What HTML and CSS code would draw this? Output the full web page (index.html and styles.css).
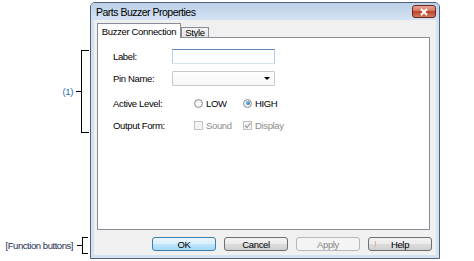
FILE: index.html
```html
<!DOCTYPE html>
<html lang="en">
<head>
    <meta charset="UTF-8">
    <title>Parts Buzzer Properties</title>
    <link rel="stylesheet" href="styles.css">
</head>
<body>
    <div class="page">
        <div class="callouts">
            <div class="callout callout-main">
                <span class="callout-text">(1)</span>
                <span class="callout-stem"></span>
                <span class="callout-bracket"></span>
            </div>
            <div class="callout callout-buttons">
                <span class="callout-text">[Function buttons]</span>
                <span class="callout-stem"></span>
                <span class="callout-bracket"></span>
            </div>
        </div>

        <div class="dialog">
            <div class="titlebar">
                <span class="title">Parts Buzzer Properties</span>
                <button class="close-btn">
                    <svg width="10" height="8" viewBox="0 0 10 8">
                        <path d="M2 1 L8 7 M8 1 L2 7" stroke="#fff" stroke-width="2" fill="none"/>
                    </svg>
                </button>
            </div>
            <div class="client">
                <div class="tabs">
                    <div class="tab active">Buzzer Connection</div>
                    <div class="tab">Style</div>
                </div>
                <div class="tab-panel">
                    <div class="row">
                        <span class="field-label">Label:</span>
                        <span class="textbox"></span>
                    </div>
                    <div class="row row-pin">
                        <span class="field-label">Pin Name:</span>
                        <span class="combo"><span class="combo-arrow"></span></span>
                    </div>
                    <div class="row row-level">
                        <span class="field-label">Active Level:</span>
                        <div class="choices">
                            <label class="choice"><span class="radio"></span>LOW</label>
                            <label class="choice"><span class="radio on"></span>HIGH</label>
                        </div>
                    </div>
                    <div class="row row-output">
                        <span class="field-label">Output Form:</span>
                        <div class="choices disabled">
                            <label class="choice"><span class="check"></span>Sound</label>
                            <label class="choice">
                                <span class="check">
                                    <svg width="7" height="7" viewBox="0 0 7 7">
                                        <path d="M1 3.5 L3 5.5 L6.5 1" stroke="#9a9a9a" stroke-width="1.2" fill="none"/>
                                    </svg>
                                </span>Display
                            </label>
                        </div>
                    </div>
                </div>
                <div class="buttons">
                    <button class="btn btn-default">OK</button>
                    <button class="btn">Cancel</button>
                    <button class="btn" disabled>Apply</button>
                    <button class="btn btn-help"><span class="focus-mark"></span>Help</button>
                </div>
            </div>
        </div>
    </div>
</body>
</html>
```

FILE: styles.css
```css
body {
    margin: 0;
    background-color: #fff;
    font-family: "Liberation Sans", Arial, sans-serif;
    font-size: 9.5px;
    letter-spacing: -0.35px;
    color: #000;
    white-space: nowrap;
}
.page {
    display: flex;
    height: 261px;
}

/* annotations on the left */
.callouts {
    position: relative;
    width: 90px;
    flex: none;
}
.callout {
    position: absolute;
    display: flex;
    align-items: center;
}
.callout-main {
    top: 50px;
    right: 1px;
}
.callout-buttons {
    top: 237px;
    right: 2px;
}
.callout-text {
    color: #2a68b8;
    margin-right: 3px;
}
.callout-buttons .callout-text {
    color: #1c2c58;
    margin-right: 4px;
    letter-spacing: -0.45px;
}
.callout-stem {
    width: 5px;
    height: 1px;
    background-color: #000;
}
.callout-bracket {
    box-sizing: border-box;
    border: 1px solid #000;
    border-right: none;
}
.callout-main .callout-bracket {
    width: 8px;
    height: 83px;
}
.callout-buttons .callout-bracket {
    width: 6px;
    height: 17px;
}

/* dialog window */
.dialog {
    margin-top: 2px;
    width: 350px;
    height: 257px;
    box-sizing: border-box;
    border: 1px solid #4f6277;
    border-radius: 5px 5px 0 0;
    background-color: #d3e1f1;
    padding: 0 3px 3px;
    display: flex;
    flex-direction: column;
}
.titlebar {
    height: 17px;
    flex: none;
    margin: 0 -3px;
    padding: 0 3px 0 5px;
    display: flex;
    align-items: center;
    justify-content: space-between;
    background: linear-gradient(#bcd0e8, #d4e2f3);
    border-radius: 4px 4px 0 0;
}
.title {
    font-size: 10.5px;
    letter-spacing: -0.5px;
    color: #000;
}
.close-btn {
    width: 24px;
    height: 13px;
    padding: 0;
    border: 1px solid #6b2a20;
    border-radius: 3px;
    background: linear-gradient(#e6a595, #d4705a 50%, #c2432c 50%, #d0785e);
    display: flex;
    align-items: center;
    justify-content: center;
}
.client {
    flex: 1;
    background-color: #f0f0f0;
    padding: 3px 6px 4px 3px;
    display: flex;
    flex-direction: column;
}

/* tabs */
.tabs {
    display: flex;
    align-items: flex-end;
    height: 14px;
    flex: none;
}
.tab {
    box-sizing: border-box;
    height: 10px;
    width: 28px;
    border: 1px solid #898c95;
    border-bottom: none;
    background: linear-gradient(#f2f2f2, #e3e3e3);
    display: flex;
    align-items: center;
    justify-content: center;
}
.tab.active {
    position: relative;
    width: 84px;
    height: 15px;
    margin-bottom: -1px;
    background: #fff;
}
.tab-panel {
    box-sizing: border-box;
    height: 193px;
    flex: none;
    border: 1px solid #898c95;
    background-color: #fff;
    padding: 11px 0 0 15px;
}

/* form rows */
.row {
    display: flex;
    align-items: center;
    height: 15px;
}
.row-pin {
    margin-top: 7px;
}
.row-level {
    margin-top: 10px;
    height: 14px;
}
.row-output {
    margin-top: 8px;
    height: 14px;
}
.field-label {
    width: 59px;
    flex: none;
}
.textbox {
    box-sizing: border-box;
    width: 103px;
    height: 15px;
    border: 1px solid;
    border-color: #5f86b4 #b6cde6 #d4e2f1 #b6cde6;
    background-color: #fff;
}
.combo {
    box-sizing: border-box;
    width: 103px;
    height: 15px;
    border: 1px solid #c9c9c9;
    border-radius: 1px;
    background: linear-gradient(#fff, #f6f6f6);
    display: flex;
    align-items: center;
    justify-content: flex-end;
    padding-right: 4px;
}
.combo-arrow {
    width: 0;
    height: 0;
    border-left: 3px solid transparent;
    border-right: 3px solid transparent;
    border-top: 3px solid #000;
}
.choices {
    display: flex;
    margin-left: 22px;
}
.choice {
    display: flex;
    align-items: center;
    width: 49px;
}
.choices.disabled {
    color: #8d8d8d;
}
.radio {
    box-sizing: border-box;
    width: 9px;
    height: 9px;
    margin-right: 3px;
    border: 1px solid #8f8f8f;
    border-radius: 50%;
    background: radial-gradient(#fff, #e2e2e2);
    display: flex;
    align-items: center;
    justify-content: center;
}
.radio.on::after {
    content: "";
    width: 4px;
    height: 4px;
    border-radius: 50%;
    background: radial-gradient(circle at 40% 40%, #6fc0f0, #1a5ea8);
}
.check {
    box-sizing: border-box;
    width: 9px;
    height: 9px;
    margin-right: 3px;
    border: 1px solid #c2c2c2;
    background-color: #f4f4f4;
    display: flex;
    align-items: center;
    justify-content: center;
}

/* function buttons */
.buttons {
    display: flex;
    justify-content: flex-end;
    gap: 8px;
    margin-top: 7px;
    margin-right: -2px;
}
.btn {
    position: relative;
    width: 64px;
    height: 14px;
    padding: 0;
    border: 1px solid #707070;
    border-radius: 3px;
    background: linear-gradient(#f2f2f2, #ebebeb 50%, #dddddd 50%, #cfcfcf);
    font-family: inherit;
    font-size: 9.5px;
    letter-spacing: -0.35px;
    color: #000;
}
.btn-default {
    border-color: #3c7fb1;
    background: linear-gradient(#eaf6fd, #d9f0fc 50%, #bee6fd 50%, #a7d9f5);
}
.btn:disabled {
    border-color: #b5b9bc;
    background: #f4f4f4;
    color: #8a8a8a;
}
.focus-mark {
    position: absolute;
    left: 6px;
    top: 3px;
    width: 1px;
    height: 6px;
    background-color: #e8b878;
}
```
